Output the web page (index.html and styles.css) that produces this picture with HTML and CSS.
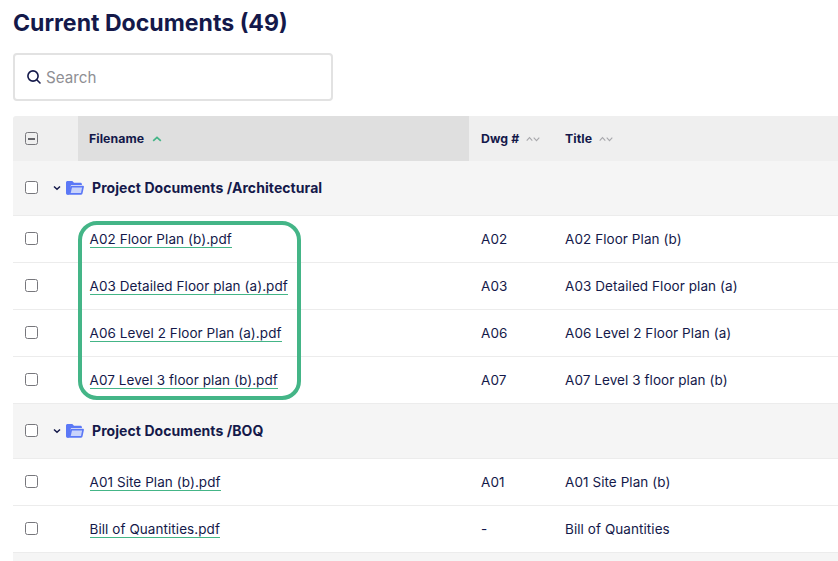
FILE: index.html
```html
<!DOCTYPE html>
<html lang="en">
<head>
<meta charset="utf-8">
<title>Current Documents</title>
<link rel="stylesheet" href="styles.css">
</head>
<body>
<main class="page">
  <h1 class="title">Current Documents (49)</h1>
  <div class="search">
    <svg class="search-icon" width="16" height="16" viewBox="0 0 16 16"><circle cx="7" cy="7" r="5.100" fill="none" stroke="#14194a" stroke-width="1.6"/><path d="M10.800 10.800l3.200 3.200" stroke="#14194a" stroke-width="1.600" stroke-linecap="round"/></svg>
    <span class="search-text">Search</span>
  </div>
  <div class="table-wrap">
    <table class="docs">
      <colgroup><col class="c-check"><col class="c-file"><col class="c-dwg"><col class="c-title"></colgroup>
      <thead>
        <tr>
          <th class="check-cell"><span class="box box-minus"></span></th>
          <th class="sorted"><span class="th-in">Filename
            <svg class="sort-up" width="10" height="6" viewBox="0 0 10 6"><path d="M1.200 4.800L5 1.300l3.800 3.500" fill="none" stroke="#44b587" stroke-width="1.700"/></svg></span></th>
          <th><span class="th-in">Dwg #
            <svg class="sort-none" width="14" height="6" viewBox="0 0 14 6"><path d="M.7 4.600L3.500 1.600l2.800 3M7.700 1.600l2.800 3 2.800-3" fill="none" stroke="#a8a8ac" stroke-width="1.100"/></svg></span></th>
          <th><span class="th-in">Title
            <svg class="sort-none" width="14" height="6" viewBox="0 0 14 6"><path d="M.7 4.600L3.500 1.600l2.800 3M7.700 1.600l2.800 3 2.800-3" fill="none" stroke="#a8a8ac" stroke-width="1.100"/></svg></span></th>
        </tr>
      </thead>
      <tbody>
        <tr class="group">
          <td class="check-cell"><span class="box"></span></td>
          <td colspan="3"><div class="group-in">
            <svg class="chev" width="8" height="6" viewBox="0 0 8 6"><path d="M1 1.500L4 4.300 7 1.500" fill="none" stroke="#14194a" stroke-width="1.500"/></svg>
            <svg class="folder" width="18" height="14" viewBox="0 0 18 14"><path d="M1.500 0h4.800l1.700 1.800h6.500c.8 0 1.400.6 1.400 1.400V4H5L2.600 13.800H1.500C.7 13.800 0 13.200 0 12.300V1.500C0 .7.7 0 1.500 0z" fill="#5b78f6"/><path d="M4.800 4.800h12.200c.7 0 1.100.5.900 1.200l-1.400 6.600c-.2.800-.8 1.200-1.500 1.200H2.200c-.4 0-.7-.1-.9-.2z" fill="#5b78f6"/><path d="M6 6.500h10.100l-1.100 5.600H4.700z" fill="#c9d3fb"/></svg>
            <strong>Project Documents /Architectural</strong>
          </div></td>
        </tr>
        <tr class="row">
          <td class="check-cell"><span class="box"></span></td>
          <td><a class="file">A02 Floor Plan (b).pdf</a></td><td>A02</td><td>A02 Floor Plan (b)</td>
        </tr>
        <tr class="row">
          <td class="check-cell"><span class="box"></span></td>
          <td><a class="file">A03 Detailed Floor plan (a).pdf</a></td><td>A03</td><td>A03 Detailed Floor plan (a)</td>
        </tr>
        <tr class="row">
          <td class="check-cell"><span class="box"></span></td>
          <td><a class="file">A06 Level 2 Floor Plan (a).pdf</a></td><td>A06</td><td>A06 Level 2 Floor Plan (a)</td>
        </tr>
        <tr class="row">
          <td class="check-cell"><span class="box"></span></td>
          <td><a class="file">A07 Level 3 floor plan (b).pdf</a></td><td>A07</td><td>A07 Level 3 floor plan (b)</td>
        </tr>
        <tr class="group">
          <td class="check-cell"><span class="box"></span></td>
          <td colspan="3"><div class="group-in">
            <svg class="chev" width="8" height="6" viewBox="0 0 8 6"><path d="M1 1.500L4 4.300 7 1.500" fill="none" stroke="#14194a" stroke-width="1.500"/></svg>
            <svg class="folder" width="18" height="14" viewBox="0 0 18 14"><path d="M1.500 0h4.800l1.700 1.800h6.500c.8 0 1.400.6 1.400 1.400V4H5L2.600 13.800H1.500C.7 13.800 0 13.200 0 12.300V1.500C0 .7.7 0 1.500 0z" fill="#5b78f6"/><path d="M4.800 4.800h12.200c.7 0 1.100.5.900 1.200l-1.400 6.600c-.2.800-.8 1.200-1.500 1.200H2.200c-.4 0-.7-.1-.9-.2z" fill="#5b78f6"/><path d="M6 6.500h10.100l-1.100 5.600H4.700z" fill="#c9d3fb"/></svg>
            <strong>Project Documents /BOQ</strong>
          </div></td>
        </tr>
        <tr class="row">
          <td class="check-cell"><span class="box"></span></td>
          <td><a class="file">A01 Site Plan (b).pdf</a></td><td>A01</td><td>A01 Site Plan (b)</td>
        </tr>
        <tr class="row">
          <td class="check-cell"><span class="box"></span></td>
          <td><a class="file">Bill of Quantities.pdf</a></td><td>-</td><td>Bill of Quantities</td>
        </tr>
        <tr class="group"><td colspan="4"></td></tr>
      </tbody>
    </table>
    <div class="highlight"></div>
  </div>
</main>
</body>
</html>
```
FILE: styles.css
```css
html, body { margin: 0; padding: 0; height: 100%; overflow: hidden; background: #fff; }
body { font-family: Inter, "Liberation Sans", sans-serif; color: #14194a; }
.page { padding: 7px 0 0 13px; height: 100%; box-sizing: border-box; overflow: hidden; }
.title { margin: 0; font-size: 23.100px; line-height: 32px; font-weight: 700; color: #14194a; }
.search { box-sizing: border-box; width: 320px; height: 48px; margin-top: 14px; border: 2px solid #e2e2e2; border-radius: 4px; display: flex; align-items: center; padding-left: 11px; gap: 4px; background: #fff; }
.search-text { font-size: 15.200px; color: #8f8f94; }
.table-wrap { position: relative; margin-top: 15px; width: 825px; overflow: hidden; }
.docs { border-collapse: separate; border-spacing: 0; table-layout: fixed; width: 900px; font-size: 13.500px; letter-spacing: 0.070px; }
.c-check { width: 65px; }
.c-file { width: 391px; }
.c-dwg { width: 84px; }
.c-title { width: 360px; }
.docs th { height: 45px; padding: 0 0 0 12px; background: #efefef; text-align: left; font-size: 12.300px; font-weight: 700; }
.docs th.sorted { padding-left: 11px; background: #dfdfdf; }
.docs th:first-child { border-radius: 3px 0 0 0; }
.th-in { display: inline-flex; align-items: center; gap: 8px; }
.sort-none { margin-left: -1px; }
.docs td { padding: 0 0 0 12px; border-bottom: 1px solid #ececec; }
.row td { height: 46px; }
.group td { height: 54px; background: #f5f5f5; }
.box { display: block; box-sizing: border-box; width: 13px; height: 13px; border: 1px solid #77777c; border-radius: 2.500px; background: #fff; position: relative; }
td .box { margin-bottom: 2px; }
.box-minus { background: transparent; }
.box-minus::after { content: ""; position: absolute; left: 2px; right: 2px; top: 4.500px; height: 2px; background: #66666b; }
.group-in { display: flex; align-items: center; font-size: 14px; margin-left: -4px; }
.group-in strong { font-weight: 700; margin-left: 8px; margin-bottom: 1px; }
.chev { margin-right: 5px; margin-left: -33px; }
.folder { margin-bottom: 1px; }
.file { color: #14194a; text-decoration: none; border-bottom: 1px solid #44b587; margin-left: -0.500px; }
.highlight { position: absolute; left: 65px; top: 105px; width: 215px; height: 171px; border: 4px solid #44b587; border-radius: 19px; }
```
